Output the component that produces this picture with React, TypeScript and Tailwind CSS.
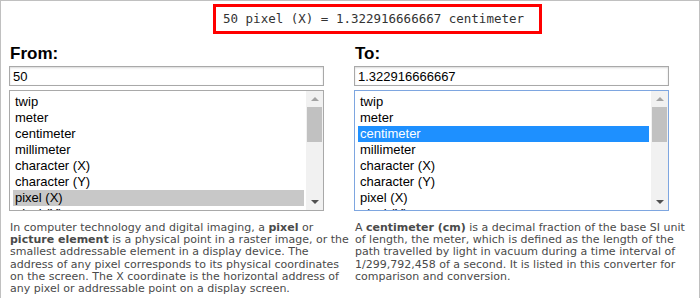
import React from 'react';

const units = [
  'twip',
  'meter',
  'centimeter',
  'millimeter',
  'character (X)',
  'character (Y)',
  'pixel (X)',
  'pixel (Y)',
];

// fake listbox, native select scrollbars don't look the same headless
function UnitList({ selected, focused }: { selected: string; focused: boolean }) {
  return (
    <div
      className={`relative w-[315px] h-[121px] overflow-hidden bg-white border ${
        focused ? 'border-[#7ea6e0]' : 'border-[#a9a9a9]'
      }`}
    >
      <div className="pt-[3px] pl-[3px] pr-[19px]">
        {units.map((u) => {
          const isSel = u === selected;
          return (
            <div
              key={u}
              className={`h-4 leading-4 pl-[2px] text-[13px] ${
                isSel
                  ? focused
                    ? 'bg-[#1e90ff] text-white'
                    : 'bg-[#c8c8c8] text-black'
                  : 'text-black'
              }`}
            >
              {u}
            </div>
          );
        })}
      </div>
      {/* scrollbar */}
      <div className="absolute top-0 right-0 w-[17px] h-full bg-[#f1f1f1] flex flex-col items-center">
        <div className="h-[16px] flex items-center justify-center">
          <div className="w-0 h-0 border-l-[4px] border-r-[4px] border-b-[4px] border-l-transparent border-r-transparent border-b-[#a3a3a3]" />
        </div>
        <div className="w-[15px] h-[35px] bg-[#c1c1c1]" />
        <div className="flex-1" />
        <div className="h-[16px] flex items-center justify-center">
          <div className="w-0 h-0 border-l-[4px] border-r-[4px] border-t-[4px] border-l-transparent border-r-transparent border-t-[#505050]" />
        </div>
      </div>
    </div>
  );
}

function Column({
  label,
  value,
  selected,
  focused,
  children,
}: {
  label: string;
  value: string;
  selected: string;
  focused: boolean;
  children: React.ReactNode;
}) {
  return (
    <div className="w-[340px]">
      <h2 className="text-[17px] font-bold leading-[22px] text-black pl-[1px]">{label}</h2>
      <input
        readOnly
        value={value}
        className="mt-[1px] block w-[315px] h-[20px] px-[3px] text-[13px] text-black bg-white border border-[#a9a9a9] shadow-[inset_0_1px_2px_rgba(0,0,0,0.15)] outline-none"
        style={{ fontFamily: '"Liberation Sans", Arial, sans-serif' }}
      />
      <div className="mt-[4px]">
        <UnitList selected={selected} focused={focused} />
      </div>
      <p
        className="mt-[11px] pl-[1px] text-[11px] leading-[12.2px] text-[#4a4a4a]"
        style={{ fontFamily: '"DejaVu Sans", Verdana, sans-serif' }}
      >
        {children}
      </p>
    </div>
  );
}

export default function App() {
  return (
    <div
      className="w-[700px] h-[298px] overflow-hidden bg-white border-t border-l border-r border-[#c0c0c0]"
      style={{ fontFamily: '"Liberation Sans", Arial, sans-serif' }}
    >
      {/* result */}
      <div className="mt-[3px] ml-[212px] w-[329px] h-[30px] border-[3px] border-[#ff0000] flex items-center pl-[7px]">
        <span
          className="text-[12.5px] text-[#333]"
          style={{ fontFamily: '"DejaVu Sans Mono", monospace' }}
        >
          50 pixel (X) = 1.322916666667 centimeter
        </span>
      </div>

      <div className="flex gap-[5px] pl-[8px] mt-[9px]">
        <Column label="From:" value="50" selected="pixel (X)" focused={false}>
          In computer technology and digital imaging, a <b>pixel</b> or <b>picture element</b> is a
          physical point in a raster image, or the smallest addressable element in a display
          device. The address of any pixel corresponds to its physical coordinates on the screen.
          The X coordinate is the horizontal address of any pixel or addressable point on a
          display screen.
        </Column>
        <Column label="To:" value="1.322916666667" selected="centimeter" focused={true}>
          A <b>centimeter (cm)</b> is a decimal fraction of the base SI unit of length, the meter,
          which is defined as the length of the path travelled by light in vacuum during a time
          interval of 1/299,792,458 of a second. It is listed in this converter for comparison and
          conversion.
        </Column>
      </div>
    </div>
  );
}
